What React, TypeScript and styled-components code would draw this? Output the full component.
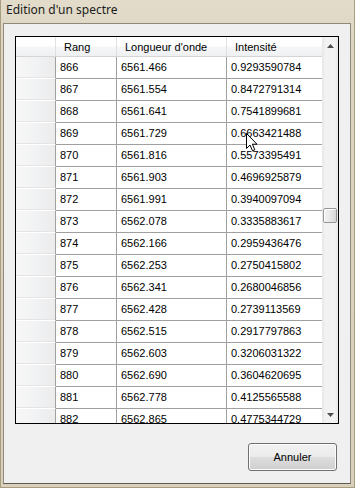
import React from "react";
import styled, { createGlobalStyle } from "styled-components";

type Row = { rang: number; lambda: string; intensity: string };

const rows: Row[] = [
  { rang: 866, lambda: "6561.466", intensity: "0.9293590784" },
  { rang: 867, lambda: "6561.554", intensity: "0.8472791314" },
  { rang: 868, lambda: "6561.641", intensity: "0.7541899681" },
  { rang: 869, lambda: "6561.729", intensity: "0.6663421488" },
  { rang: 870, lambda: "6561.816", intensity: "0.5573395491" },
  { rang: 871, lambda: "6561.903", intensity: "0.4696925879" },
  { rang: 872, lambda: "6561.991", intensity: "0.3940097094" },
  { rang: 873, lambda: "6562.078", intensity: "0.3335883617" },
  { rang: 874, lambda: "6562.166", intensity: "0.2959436476" },
  { rang: 875, lambda: "6562.253", intensity: "0.2750415802" },
  { rang: 876, lambda: "6562.341", intensity: "0.2680046856" },
  { rang: 877, lambda: "6562.428", intensity: "0.2739113569" },
  { rang: 878, lambda: "6562.515", intensity: "0.2917797863" },
  { rang: 879, lambda: "6562.603", intensity: "0.3206031322" },
  { rang: 880, lambda: "6562.690", intensity: "0.3604620695" },
  { rang: 881, lambda: "6562.778", intensity: "0.4125565588" },
  { rang: 882, lambda: "6562.865", intensity: "0.4775344729" },
];

const GlobalStyle = createGlobalStyle`
  html, body {
    margin: 0;
    padding: 0;
    background: #cfc5a8;
  }
  * {
    box-sizing: border-box;
  }
`;

const Frame = styled.div`
  position: relative;
  width: 355px;
  height: 488px;
  display: flex;
  flex-direction: column;
  background: linear-gradient(to bottom, #e3dccb 0%, #ddd5c1 10%, #d8d0ba 100%);
  border-left: 1px solid #a89d7e;
  border-right: 1px solid #a89d7e;
  border-bottom: 1px solid #a89d7e;
  overflow: hidden;
`;

const TitleBar = styled.div`
  height: 23px;
  padding: 2px 0 0 5px;
  font-family: "Noto Sans", "Open Sans", sans-serif;
  font-size: 12px;
  color: #1b1b1b;
  line-height: 16px;
`;

const Client = styled.div`
  flex: 1;
  margin: 0 3px 3px 2px;
  border: 1px solid #8f8a7d;
  border-bottom-color: #5e5a52;
  background: #f0f0f0;
  padding: 12px 12px 12px 11px;
  display: flex;
  flex-direction: column;
  font-family: "Liberation Sans", Arial, sans-serif;
  font-size: 11px;
`;

const GridBox = styled.div`
  width: 324px;
  height: 388px;
  border: 1px solid #000;
  display: flex;
  background: #fff;
`;

const Table = styled.div`
  width: 306px;
  display: grid;
  grid-template-columns: 40px 61px 110px 95px;
  grid-auto-rows: 22px;
  grid-template-rows: 20px;
  overflow: hidden;
  align-content: start;
`;

const HeadCell = styled.div<{ $last?: boolean }>`
  background: linear-gradient(to bottom, #ffffff 0%, #ffffff 45%, #f5f6f7 55%, #eef0f2 100%);
  border-right: ${(p) => (p.$last ? "none" : "1px solid #dde0e4")};
  border-bottom: 1px solid #d5d5d5;
  padding: 2px 0 0 8px;
  line-height: 16px;
  color: #000;
  white-space: nowrap;
`;

const RowHead = styled.div`
  background: linear-gradient(to right, #f7f7f7 0%, #f1f2f3 55%, #ebebec 100%);
  border-right: 1px solid #a0a0a0;
  border-bottom: 1px solid #ffffff;
  box-shadow: inset 0 -1px 0 #e4e4e4;
`;

const Cell = styled.div<{ $last?: boolean }>`
  border-right: ${(p) => (p.$last ? "none" : "1px solid #a0a0a0")};
  border-bottom: 1px solid #a0a0a0;
  padding: 0 0 0 4px;
  line-height: 21px;
  color: #000;
  white-space: nowrap;
  overflow: hidden;
`;

const ScrollBar = styled.div`
  width: 16px;
  position: relative;
  background: linear-gradient(to right, #e6e6e6 0%, #f2f2f2 20%, #f3f3f3 80%, #e9e9e9 100%);
  display: flex;
  flex-direction: column;
  align-items: center;
`;

const Arrow = styled.div<{ $down?: boolean }>`
  height: 17px;
  width: 16px;
  display: flex;
  align-items: center;
  justify-content: center;
  ${(p) => (p.$down ? "margin-top: auto;" : "")}
`;

const Thumb = styled.div`
  position: absolute;
  left: 1px;
  top: 171px;
  width: 14px;
  height: 15px;
  border: 1px solid #979797;
  border-radius: 2px;
  background: linear-gradient(to right, #f3f3f3 0%, #e8e8e8 50%, #d6d6d6 100%);
  box-shadow: inset 1px 1px 0 #ffffff;
`;

const Footer = styled.div`
  margin-top: auto;
  display: flex;
  justify-content: flex-end;
  padding-right: 1px;
`;

const Button = styled.button`
  width: 89px;
  height: 28px;
  border: 1px solid #707070;
  border-radius: 3px;
  background: linear-gradient(to bottom, #f2f2f2 0%, #ebebeb 48%, #dddddd 52%, #cfcfcf 100%);
  box-shadow: inset 0 0 0 1px #fcfcfc;
  font-family: "Liberation Sans", Arial, sans-serif;
  font-size: 11px;
  color: #000;
  padding: 0;
`;

const Cursor = styled.svg`
  position: absolute;
  left: 245px;
  top: 133px;
  pointer-events: none;
`;

const App = () => {
  return (
    <>
      <GlobalStyle />
      <Frame>
        <TitleBar>Edition d'un spectre</TitleBar>
        <Client>
          <GridBox>
            <Table>
              <HeadCell />
              <HeadCell>Rang</HeadCell>
              <HeadCell>Longueur d'onde</HeadCell>
              <HeadCell $last>Intensité</HeadCell>
              {rows.map((r) => (
                <React.Fragment key={r.rang}>
                  <RowHead />
                  <Cell>{r.rang}</Cell>
                  <Cell>{r.lambda}</Cell>
                  <Cell $last>{r.intensity}</Cell>
                </React.Fragment>
              ))}
            </Table>
            <ScrollBar>
              <Arrow>
                <svg width="7" height="4" viewBox="0 0 7 4">
                  <path d="M3.5 0 L7 4 L0 4 Z" fill="#4d4d4d" />
                </svg>
              </Arrow>
              <Thumb />
              <Arrow $down>
                <svg width="7" height="4" viewBox="0 0 7 4">
                  <path d="M0 0 L7 0 L3.5 4 Z" fill="#4d4d4d" />
                </svg>
              </Arrow>
            </ScrollBar>
          </GridBox>
          <Footer>
            <Button>Annuler</Button>
          </Footer>
        </Client>
        <Cursor width="12" height="19" viewBox="0 0 12 19">
          <path
            d="M0.5 0.5 L0.5 15.5 L4 12 L6.5 17.8 L8.8 16.8 L6.4 11.2 L11 11.2 Z"
            fill="#ffffff"
            stroke="#000000"
            strokeWidth="1"
            strokeLinejoin="miter"
          />
        </Cursor>
      </Frame>
    </>
  );
};

export default App;
